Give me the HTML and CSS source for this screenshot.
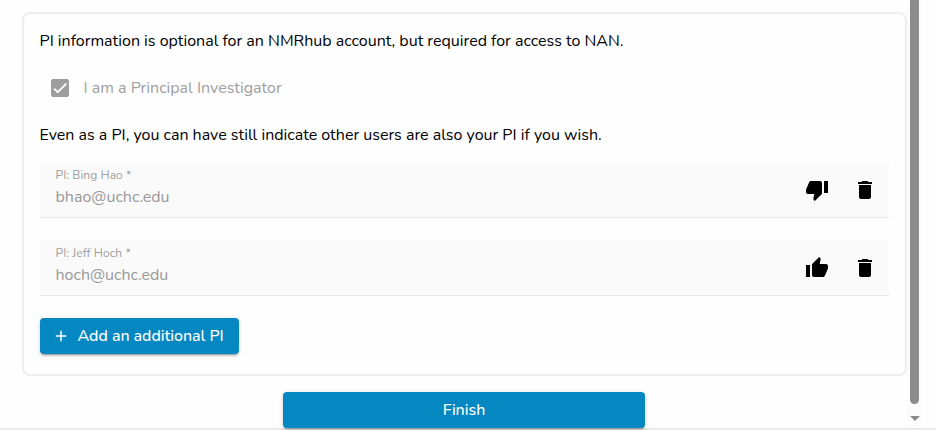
FILE: index.html
```html
<!DOCTYPE html>
<html lang="en">
<head>
  <meta charset="UTF-8" />
  <meta name="viewport" content="width=device-width, initial-scale=1.0"/>
  <title>Principal Investigator</title>
  <link rel="stylesheet" href="styles.css">
</head>
<body>
  <div class="page">
    <main class="content">
      <section class="card">
        <p class="info">PI information is optional for an NMRhub account, but required for access to NAN.</p>

        <div class="checkbox-row">
          <span class="checkbox">
            <svg viewBox="0 0 24 24"><path fill="none" stroke="#fff" stroke-width="3.12" d="M1.73 12.91 8.1 19.28 22.79 4.59"/></svg>
          </span>
          <span class="checkbox-label">I am a Principal Investigator</span>
        </div>

        <p class="info second">Even as a PI, you can have still indicate other users are also your PI if you wish.</p>

        <div class="field">
          <div class="field-text">
            <span class="field-label">PI: Bing Hao *</span>
            <span class="field-value">bhao@uchc.edu</span>
          </div>
          <button class="icon-btn" aria-label="Thumb down">
            <svg viewBox="0 0 24 24"><path d="M15 3H6c-.83 0-1.54.5-1.84 1.22l-3.02 7.05c-.09.23-.14.47-.14.73v2c0 1.1.9 2 2 2h6.31l-.95 4.57-.03.32c0 .41.17.79.44 1.06L9.83 23l6.59-6.59c.36-.36.58-.86.58-1.41V5c0-1.1-.9-2-2-2zm4 0v12h4V3h-4z"/></svg>
          </button>
          <button class="icon-btn" aria-label="Delete">
            <svg viewBox="0 0 24 24"><path d="M6 19c0 1.1.9 2 2 2h8c1.1 0 2-.9 2-2V7H6v12zM19 4h-3.5l-1-1h-5l-1 1H5v2h14V4z"/></svg>
          </button>
        </div>

        <div class="field">
          <div class="field-text">
            <span class="field-label">PI: Jeff Hoch *</span>
            <span class="field-value">hoch@uchc.edu</span>
          </div>
          <button class="icon-btn" aria-label="Thumb up">
            <svg viewBox="0 0 24 24"><path d="M1 21h4V9H1v12zm22-11c0-1.1-.9-2-2-2h-6.31l.95-4.57.03-.32c0-.41-.17-.79-.44-1.06L14.17 1 7.59 7.59C7.22 7.95 7 8.45 7 9v10c0 1.1.9 2 2 2h9c.83 0 1.54-.5 1.84-1.22l3.02-7.05c.09-.23.14-.47.14-.73v-2z"/></svg>
          </button>
          <button class="icon-btn" aria-label="Delete">
            <svg viewBox="0 0 24 24"><path d="M6 19c0 1.1.9 2 2 2h8c1.1 0 2-.9 2-2V7H6v12zM19 4h-3.5l-1-1h-5l-1 1H5v2h14V4z"/></svg>
          </button>
        </div>

        <button class="btn btn-add">
          <svg viewBox="0 0 24 24"><path d="M19 13h-6v6h-2v-6H5v-2h6V5h2v6h6v2z"/></svg>
          <span>Add an additional PI</span>
        </button>
      </section>

      <button class="btn btn-finish">Finish</button>
    </main>

    <div class="scrollbar">
      <div class="thumb"></div>
      <div class="arrow"></div>
    </div>
  </div>
</body>
</html>
```

FILE: styles.css
```css
* {
  box-sizing: border-box;
}
body {
  margin: 0;
  height: 430px;
  overflow: hidden;
  background: #fefefe;
  font-family: Nunito, Lato, sans-serif;
  font-size: 16px;
  color: #000;
}
.page {
  display: flex;
  height: 430px;
  border-bottom: 2px solid #e9e9e9;
}
.content {
  width: 907px;
  padding: 12px 0 0 22px;
}
.card {
  height: 364px;
  padding: 15px 16.5px 0 15.5px;
  border: 2px solid #eee;
  border-radius: 8px;
}
.info {
  margin: 0;
  line-height: 24px;
  white-space: nowrap;
}
.info.second {
  margin-bottom: 15px;
}

/* Checkbox */
.checkbox-row {
  display: flex;
  align-items: center;
  height: 40px;
  margin: 15px 0;
  padding-left: 11px;
  gap: 15px;
}
.checkbox {
  display: flex;
  width: 18px;
  height: 18px;
  padding: 2px;
  border-radius: 2px;
  background: #9e9e9e;
}
.checkbox svg {
  width: 14px;
  height: 14px;
}
.checkbox-label {
  color: #9e9e9e;
}

/* PI fields */
.field {
  display: flex;
  align-items: center;
  height: 56px;
  margin-bottom: 22px;
  padding-left: 16px;
  background: #fafafa;
  border-bottom: 1px solid #e8e8e8;
  border-radius: 4px 4px 0 0;
}
.field-text {
  display: flex;
  flex-direction: column;
  flex: 1;
  align-self: flex-start;
  padding-top: 5px;
}
.field-label {
  font-size: 12px;
  line-height: 16px;
  letter-spacing: 0.07px;
  color: #9e9e9e;
}
.field-value {
  line-height: 24px;
  margin-top: 2px;
  color: #999;
}
.icon-btn {
  display: flex;
  align-items: center;
  justify-content: center;
  width: 48px;
  height: 48px;
  padding: 0;
  border: none;
  background: none;
  color: #000;
  cursor: pointer;
}
.icon-btn svg {
  width: 24px;
  height: 24px;
}

/* Buttons */
.btn {
  display: flex;
  align-items: center;
  justify-content: center;
  height: 36px;
  padding: 0;
  border: none;
  border-radius: 4px;
  background: #0587c1;
  color: #fff;
  font-family: inherit;
  font-size: 16px;
  font-weight: 500;
  letter-spacing: -0.05px;
  white-space: nowrap;
  cursor: pointer;
  box-shadow: 0 3px 1px -2px rgba(0,0,0,0.2), 0 2px 2px 0 rgba(0,0,0,0.14), 0 1px 5px 0 rgba(0,0,0,0.12);
}
.btn-add {
  width: 199px;
  justify-content: flex-start;
  padding-left: 12px;
  gap: 8px;
}
.btn-add svg {
  width: 18px;
  height: 18px;
  fill: #fff;
}
.btn-finish {
  width: 362px;
  margin: 16px 0 0 261px;
}

/* Scrollbar */
.scrollbar {
  display: flex;
  flex-direction: column;
  align-items: center;
  width: 15px;
  background: #fcfcfc;
}
.thumb {
  width: 9px;
  height: 404px;
  border-radius: 0 0 5px 5px;
  background: #8b8b8b;
}
.arrow {
  margin-top: 12px;
  border: 5px solid transparent;
  border-top-color: #8b8b8b;
  border-bottom: none;
}
```
